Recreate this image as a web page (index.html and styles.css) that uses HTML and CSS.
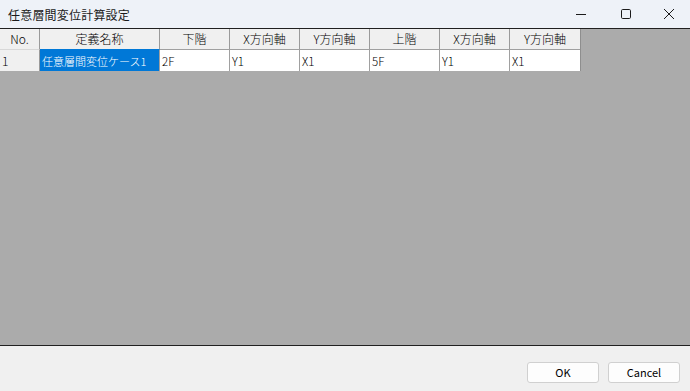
FILE: index.html
```html
<!DOCTYPE html>
<html lang="ja">
<head>
<meta charset="utf-8">
<link rel="stylesheet" href="styles.css">
</head>
<body>
<div class="window">
  <div class="titlebar">
    <span class="title">任意層間変位計算設定</span>
    <div class="controls">
      <span class="ctl"><svg width="12" height="12" viewBox="0 0 12 12"><path d="M1 6.5h10" stroke="#1b1b1b" stroke-width="1"/></svg></span>
      <span class="ctl"><svg width="12" height="12" viewBox="0 0 12 12"><rect x="1.5" y="1.5" width="9" height="9" rx="1.2" fill="none" stroke="#1b1b1b" stroke-width="1"/></svg></span>
      <span class="ctl"><svg width="12" height="12" viewBox="0 0 12 12"><path d="M1 1L11 11M11 1L1 11" stroke="#1b1b1b" stroke-width="1"/></svg></span>
    </div>
  </div>
  <div class="main">
    <div class="grid">
      <div class="hc">No.</div>
      <div class="hc">定義名称</div>
      <div class="hc">下階</div>
      <div class="hc">X方向軸</div>
      <div class="hc">Y方向軸</div>
      <div class="hc">上階</div>
      <div class="hc">X方向軸</div>
      <div class="hc">Y方向軸</div>
      <div class="rh">1</div>
      <div class="dc sel">任意層間変位ケース1</div>
      <div class="dc">2F</div>
      <div class="dc">Y1</div>
      <div class="dc">X1</div>
      <div class="dc">5F</div>
      <div class="dc">Y1</div>
      <div class="dc">X1</div>
    </div>
  </div>
  <div class="footer">
    <button class="btn">OK</button>
    <button class="btn">Cancel</button>
  </div>
</div>
</body>
</html>
```
FILE: styles.css
```css
html, body {
  margin: 0;
  padding: 0;
}
body {
  width: 690px;
  height: 391px;
  overflow: hidden;
  font-family: "Noto Sans CJK JP", "Noto Sans", sans-serif;
}
.window {
  display: flex;
  flex-direction: column;
  height: 391px;
}
.titlebar {
  height: 28px;
  background: #eef2f8;
  border-bottom: 1px solid #202020;
  display: flex;
  align-items: center;
  justify-content: space-between;
  flex-shrink: 0;
}
.title {
  font-size: 12px;
  color: #1a1a1a;
  padding-left: 8px;
  letter-spacing: 0.2px;
}
.controls {
  display: flex;
  height: 28px;
}
.ctl {
  width: 45px;
  display: flex;
  align-items: center;
  justify-content: center;
}
.ctl:last-child {
  width: 42px;
}
.main {
  flex: 1;
  background: #ababab;
}
.grid {
  display: grid;
  grid-template-columns: 40px 120px repeat(6, 70px);
  grid-template-rows: 20px 22px;
  width: 580px;
  border-right: 1px solid #8e8e8e;
  font-size: 12px;
  font-weight: 300;
  color: #000;
}
.hc {
  background: #f0f0f0;
  border-right: 1px solid #9a9a9a;
  display: flex;
  align-items: center;
  justify-content: center;
  line-height: 1;
}
.hc:nth-child(8) {
  border-right: none;
}
.rh {
  background: #f0f0f0;
  border-right: 1px solid #9a9a9a;
  border-top: 1px solid #d8d8d8;
  display: flex;
  align-items: center;
  padding-left: 2px;
}
.dc {
  background: #fff;
  border-right: 1px solid #a0a0a0;
  border-top: 1px solid #a0a0a0;
  display: flex;
  align-items: center;
  padding-left: 2px;
  font-size: 11.5px;
}
.dc:last-child {
  border-right: none;
}
.dc.sel {
  background: #0078d7;
  color: #fff;
  border-top-color: #0078d7;
  font-size: 11px;
}
.footer {
  height: 46px;
  background: #f0f0f0;
  border-top: 1px solid #202020;
  flex-shrink: 0;
  display: flex;
  justify-content: flex-end;
  align-items: flex-start;
  gap: 9px;
  padding: 16px 10px 0 0;
  box-sizing: border-box;
}
.btn {
  width: 72px;
  height: 21px;
  background: #fdfdfd;
  border: 1px solid #d0d0d0;
  border-radius: 3px;
  font-family: "Noto Sans CJK JP", "Noto Sans", sans-serif;
  font-size: 11px;
  font-weight: 400;
  color: #000;
  padding: 0;
  line-height: 1;
}
```
